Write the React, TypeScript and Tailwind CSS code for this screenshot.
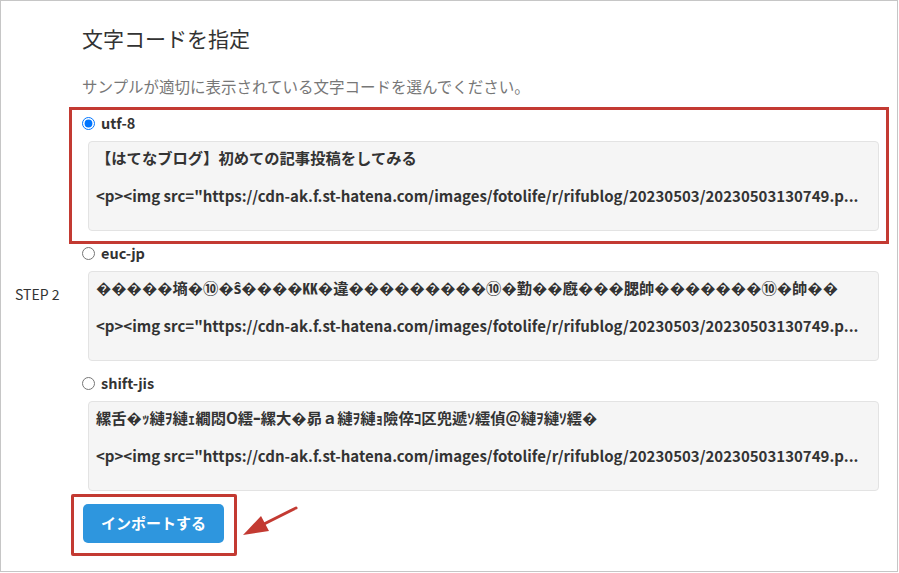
import React from 'react';

const URL_LINE =
  '<p><img src="https://cdn-ak.f.st-hatena.com/images/fotolife/r/rifublog/20230503/20230503130749.p...';

const options = [
  {
    code: 'utf-8',
    checked: true,
    sample: '【はてなブログ】初めての記事投稿をしてみる',
  },
  {
    code: 'euc-jp',
    checked: false,
    sample: '�����墒�⑩�ŝ����㏍�違���������⑩�勤��廐���腮帥�������⑩�帥��',
  },
  {
    code: 'shift-jis',
    checked: false,
    sample: '縲舌�ｯ縺ｦ縺ｪ繝悶Ο繧ｰ縲大�昴ａ縺ｦ縺ｮ險倅ｺ区兜遞ｿ繧偵＠縺ｦ縺ｿ繧�',
  },
];

const CharsetOption = ({ code, checked, sample }: { code: string; checked: boolean; sample: string }) => (
  <div className="mb-[13px]">
    {/* radio row */}
    <label className="flex items-center h-[18px] gap-[6px]">
      <input
        type="radio"
        name="charset"
        defaultChecked={checked}
        className="m-0 w-[13px] h-[13px] accent-[#0075ff]"
      />
      <span className="text-[14.5px] font-bold text-[#333]">{code}</span>
    </label>

    {/* sample preview */}
    <div className="mt-[9px] ml-[6px] h-[90px] bg-[#f5f5f5] border border-[#e3e3e3] rounded-[4px] px-[7px] pt-[6px] text-[#333] font-bold leading-[19px]">
      <p className="text-[15.3px] whitespace-nowrap">{sample}</p>
      <p className="mt-[19px] text-[15px] whitespace-nowrap">{URL_LINE}</p>
    </div>
  </div>
);

export default function App() {
  return (
    <div
      className="relative w-[898px] h-[572px] border border-[#c6c6c6] bg-white flex"
      style={{ fontFamily: '"Noto Sans CJK JP", "Noto Sans", sans-serif' }}
    >
      {/* left label column */}
      <div className="w-[81px] shrink-0 pl-[14px] pt-[280px]">
        <span className="text-[14px] text-[#333] leading-[18px]">STEP 2</span>
      </div>

      {/* main column */}
      <div className="flex-1 min-w-0 pr-[18px] pt-[22px]">
        <h2 className="text-[21px] text-[#333] leading-[30px]">文字コードを指定</h2>
        <p className="mt-[22px] text-[15.5px] text-[#777] leading-[22px]">
          サンプルが適切に表示されている文字コードを選んでください。
        </p>

        <div className="mt-[17px]">
          {options.map((opt) => (
            <CharsetOption key={opt.code} {...opt} />
          ))}
        </div>

        <div className="relative mt-[10px] ml-[1px] w-[141px]">
          <button className="w-[141px] h-[39px] rounded-[5px] bg-[#2e96de] text-white text-[15px] font-bold">
            インポートする
          </button>
          <div className="absolute -left-[12px] -top-[10px] w-[166px] h-[62px] border-[3px] border-[#c33a32] rounded-[2px] pointer-events-none" />
        </div>
      </div>

      {/* annotation: red frame around utf-8 */}
      <div className="absolute left-[68px] top-[106px] w-[820px] h-[137px] border-[3px] border-[#c33a32] pointer-events-none" />

      {/* annotation arrow */}
      <svg className="absolute left-[239px] top-[499px] pointer-events-none" width="60" height="40" viewBox="0 0 60 40">
        <line x1="56" y1="8" x2="22" y2="25" stroke="#c33a32" strokeWidth="3" strokeLinecap="round" />
        <polygon points="3,35 29,31 21,16" fill="#c33a32" />
      </svg>
    </div>
  );
}
